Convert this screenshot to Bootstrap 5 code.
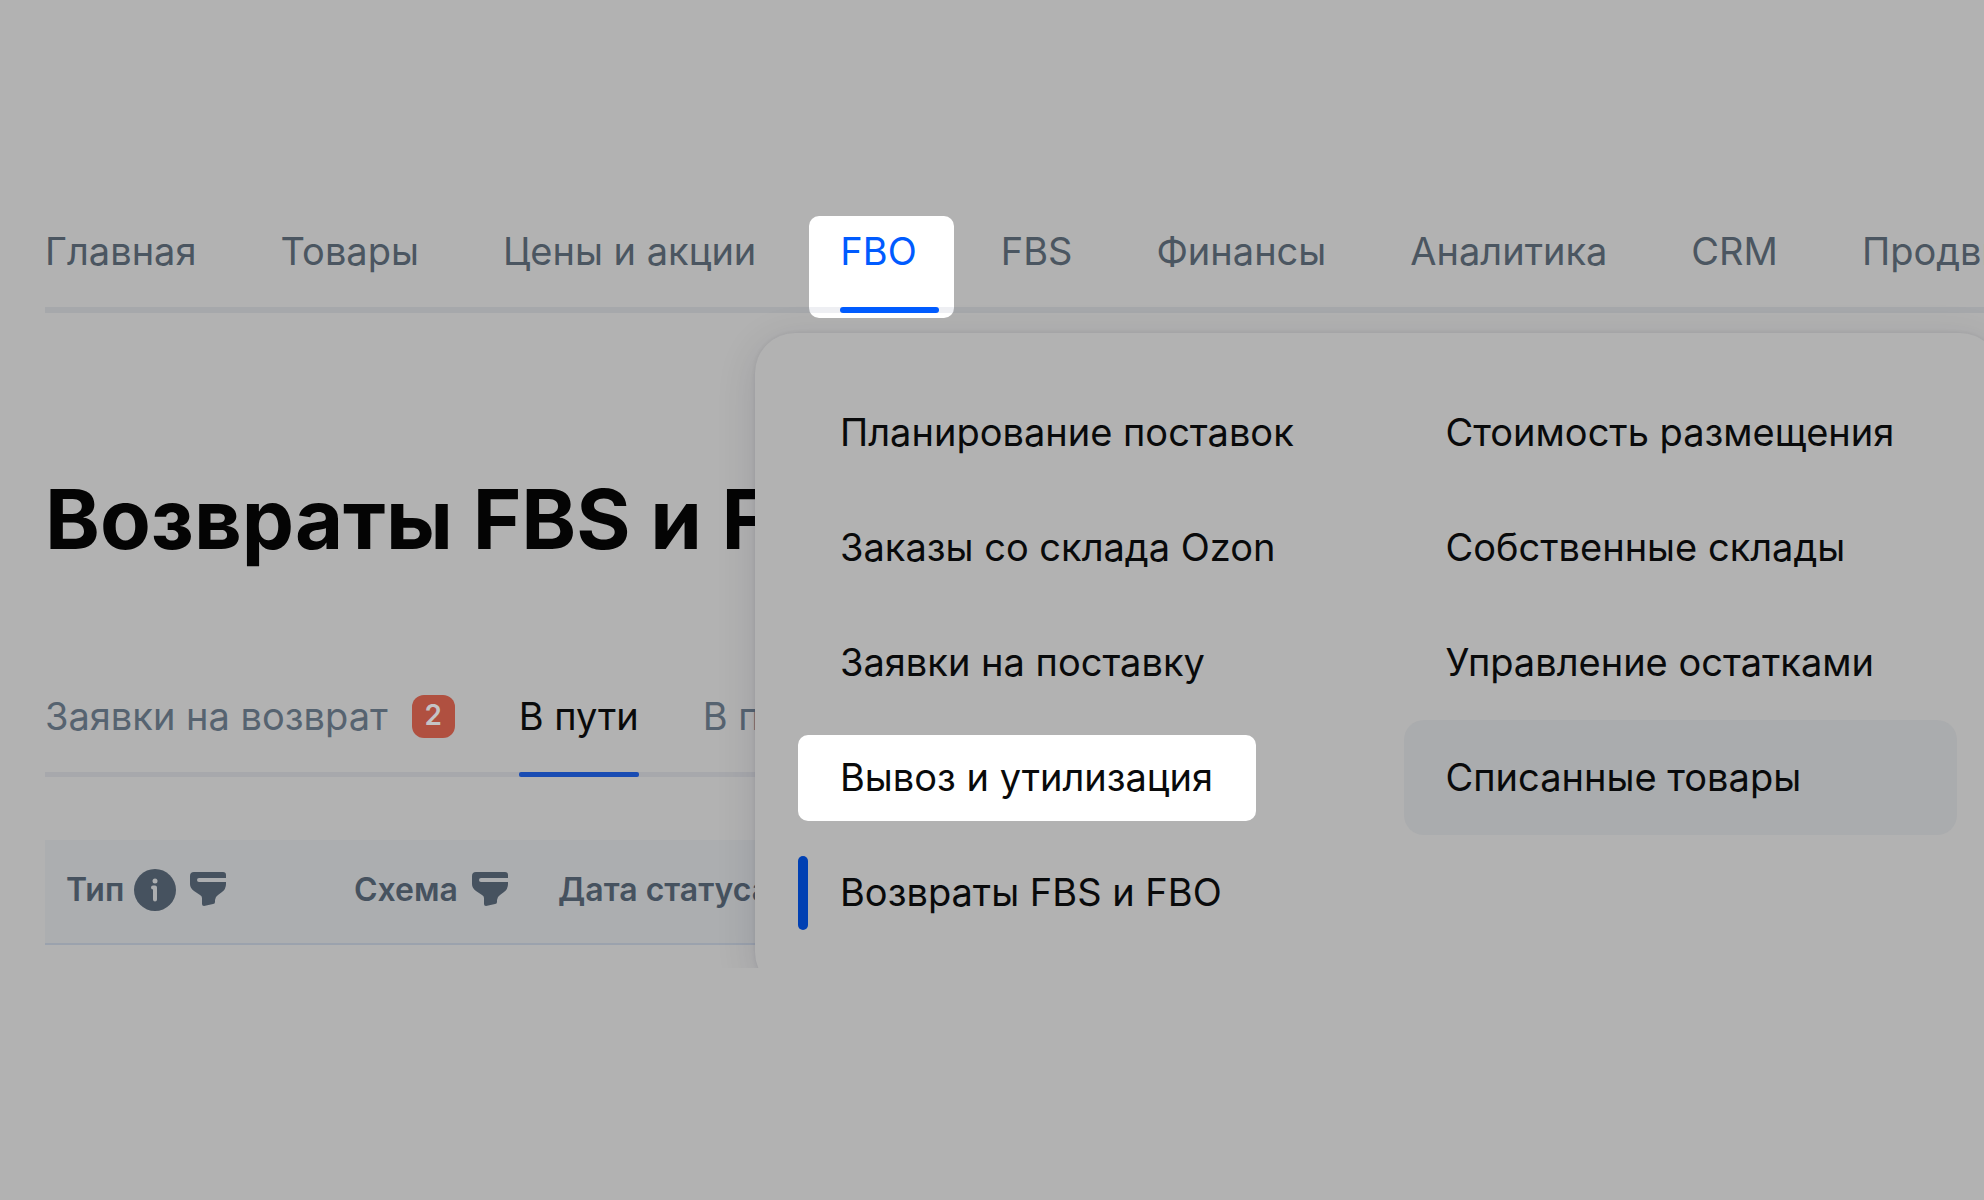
<!DOCTYPE html>
<html lang="ru">
<head>
<meta charset="utf-8">
<meta name="viewport" content="width=device-width, initial-scale=1">
<title>Возвраты FBS и FBO</title>
<link href="https://cdn.jsdelivr.net/npm/bootstrap@5.3.0/dist/css/bootstrap.min.css" rel="stylesheet">
<style>
  body { background: #b2b2b2; color: #090a0b; font-family: Inter, "Liberation Sans", sans-serif; font-size: 38px; line-height: 48px; }
  a { color: inherit; text-decoration: none; }
  .shell { padding: 227px 0 23px 45px; }

  .main-nav { gap: 84px; border-bottom: 6px solid #a6a8ab; color: #4b5661; }
  .main-nav a { display: block; padding-bottom: 32px; white-space: nowrap; }
  .main-nav .current { position: relative; z-index: 2; color: #005bff; }
  .main-nav .current::before { content: ""; position: absolute; z-index: -1; inset: -11px -37px -11px -31px; border-radius: 10px;
    background: linear-gradient(#eeeff3, #eeeff3) 0 91px / 100% 6px no-repeat #fff; }
  .main-nav .current::after { content: ""; position: absolute; left: 0; right: -22px; bottom: -6px; height: 6px; border-radius: 3px; background: #005bff; }

  .page-title { margin: 156px 0 123px; font-size: 83px; line-height: 100px; font-weight: 700; color: #040404; white-space: nowrap; }

  .tabs { gap: 64px; border-bottom: 5px solid #a7a8ac; color: #566370; }
  .tabs a { position: relative; display: flex; align-items: center; gap: 24px; padding-bottom: 32px; white-space: nowrap; }
  .tabs .current { color: #090a0b; }
  .tabs .current::after { content: ""; position: absolute; left: 0; right: 0; bottom: -5px; height: 5px; border-radius: 2px; background: #194cb3; }
  .counter { width: 43px; height: 43px; border-radius: 12px; background: #b05040; color: #c4c4c6; font-size: 28px; line-height: 40px; font-weight: 600; text-align: center; }

  .grid-head { margin: 63px 0 0; table-layout: fixed; width: 100%; border-bottom: 2px solid #9ba2ad; background: #acaeb0; color: #46525f; font-size: 32px; }
  .grid-head th { height: 104px; padding: 0 0 4px 21px; font-weight: 600; white-space: nowrap; }
  .head-cell { gap: 14px; }
  .head-label { gap: 10px; }
  .col-type { width: 288px; }
  .col-scheme { width: 204px; }

  .mega { position: absolute; z-index: 1; top: 333px; left: 755px; right: -16px; gap: 52px; padding: 42px 43px; border-radius: 40px; background: #b2b2b2; box-shadow: 0 8px 40px rgba(0, 20, 40, .12), 0 0 4px rgba(0, 20, 40, .08); }
  .mega-list { flex: 1 1 0; }
  .mega-list a { position: relative; z-index: 0; display: block; padding-left: 42px; border-radius: 20px; line-height: 115px; white-space: nowrap; }
  .mega-list .hovered { background: #aaacae; }
  .mega-list .spot::before { content: ""; position: absolute; z-index: -1; inset: 15px 96px 14px 0; border-radius: 10px; background: #fff; }
  .mega-list .active-page::before { content: ""; position: absolute; left: 0; top: 21px; bottom: 20px; width: 10px; border-radius: 5px; background: #0040b3; }
</style>
<script src="https://cdn.jsdelivr.net/npm/bootstrap@5.3.0/dist/js/bootstrap.bundle.min.js"></script>
</head>
<body>
<svg class="d-none" aria-hidden="true">
  <symbol id="funnel" viewBox="0 0 36 35">
    <path fill="currentColor" d="M4 0H33Q36 0 36 3V6H9Q7 6 7 8T9 10H36V12Q36 17 32 20L28 23Q25 25 25 28V30Q25 32 23 32L14 34Q12 34 12 32V26Q12 24 10 23L4 19Q0 16 0 12V4Q0 0 4 0Z"/>
  </symbol>
</svg>
<div class="shell position-relative overflow-hidden">
  <nav>
    <ul class="main-nav d-flex list-unstyled mb-0">
      <li><a href="#">Главная</a></li>
      <li><a href="#">Товары</a></li>
      <li><a href="#">Цены и акции</a></li>
      <li><a href="#" class="current" aria-current="true">FBO</a></li>
      <li><a href="#">FBS</a></li>
      <li><a href="#">Финансы</a></li>
      <li><a href="#">Аналитика</a></li>
      <li><a href="#">CRM</a></li>
      <li><a href="#">Продвижение</a></li>
    </ul>
  </nav>

  <main>
    <h1 class="page-title">Возвраты FBS и FBO</h1>
    <ul class="tabs d-flex list-unstyled mb-0">
      <li><a href="#">Заявки на возврат <span class="counter">2</span></a></li>
      <li><a href="#" class="current">В пути</a></li>
      <li><a href="#">В пункте выдачи</a></li>
    </ul>
    <table class="grid-head">
      <thead>
        <tr>
          <th class="col-type" scope="col">
            <div class="head-cell d-flex align-items-center">
              <span class="head-label d-flex align-items-center">Тип
                <svg width="42" height="42" viewBox="0 0 42 42" aria-hidden="true"><circle cx="21" cy="21" r="21" fill="#46525f"/><circle cx="21" cy="12" r="2.500" fill="#acaeb0"/><path d="M19 18.500h2v12" fill="none" stroke="#acaeb0" stroke-width="4" stroke-linecap="round" stroke-linejoin="round"/></svg>
              </span>
              <svg width="36" height="35" aria-hidden="true"><use href="#funnel"/></svg>
            </div>
          </th>
          <th class="col-scheme" scope="col">
            <div class="head-cell d-flex align-items-center">Схема
              <svg width="36" height="35" aria-hidden="true"><use href="#funnel"/></svg>
            </div>
          </th>
          <th scope="col">Дата статуса</th>
        </tr>
      </thead>
    </table>
  </main>

  <div class="mega d-flex">
    <ul class="mega-list list-unstyled mb-0">
      <li><a href="#">Планирование поставок</a></li>
      <li><a href="#">Заказы со склада Ozon</a></li>
      <li><a href="#">Заявки на поставку</a></li>
      <li><a href="#" class="spot">Вывоз и утилизация</a></li>
      <li><a href="#" class="active-page" aria-current="page">Возвраты FBS и FBO</a></li>
    </ul>
    <ul class="mega-list list-unstyled mb-0">
      <li><a href="#">Стоимость размещения</a></li>
      <li><a href="#">Собственные склады</a></li>
      <li><a href="#">Управление остатками</a></li>
      <li><a href="#" class="hovered">Списанные товары</a></li>
    </ul>
  </div>
</div>
</body>
</html>
